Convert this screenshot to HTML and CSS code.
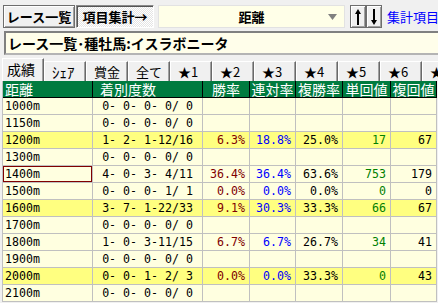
FILE: index.html
```html
<!DOCTYPE html>
<html lang="ja">
<head>
    <meta charset="UTF-8">
    <meta name="viewport" content="width=device-width, initial-scale=1.0">
    <title>レース一覧・種牡馬</title>
    <link rel="stylesheet" href="styles.css">
</head>
<body>
    <div class="toolbar">
        <div class="tool-btn btn-list">レース一覧</div>
        <div class="tool-btn btn-sum">項目集計→</div>
        <div class="select">
            <span></span>
            <span class="select-text">距離</span>
            <svg class="select-arrow" width="9" height="6" viewBox="0 0 9 6"><path d="M0 0h9L4.5 6z" fill="#808080"/></svg>
        </div>
        <div class="tool-btn sort-btn">
            <svg width="6" height="16" viewBox="0 0 6 16"><path d="M3 0L6 5H4V16H2V5H0z" fill="#000"/></svg>
        </div>
        <div class="tool-btn sort-btn">
            <svg width="6" height="16" viewBox="0 0 6 16"><path d="M3 16L6 11H4V0H2V11H0z" fill="#000"/></svg>
        </div>
        <a class="link">集計項目よ</a>
    </div>

    <div class="title">レース一覧･種牡馬:イスラボニータ</div>

    <div class="tabs">
        <div class="tab active">成績</div>
        <div class="tab tab-kana">ｼｪｱ</div>
        <div class="tab">賞金</div>
        <div class="tab">全て</div>
        <div class="tab">★1</div>
        <div class="tab">★2</div>
        <div class="tab">★3</div>
        <div class="tab">★4</div>
        <div class="tab">★5</div>
        <div class="tab">★6</div>
        <div class="tab">★7</div>
    </div>

    <div class="grid">
        <div class="row head">
            <div class="cell dist">距離</div>
            <div class="cell record">着別度数</div>
            <div class="cell">勝率</div>
            <div class="cell">連対率</div>
            <div class="cell">複勝率</div>
            <div class="cell">単回値</div>
            <div class="cell">複回値</div>
        </div>
        <div class="row">
            <div class="cell dist">1000m</div><div class="cell record">0- 0- 0- 0/ 0</div>
            <div class="cell win"></div><div class="cell rentai"></div><div class="cell"></div><div class="cell tan"></div><div class="cell"></div>
        </div>
        <div class="row">
            <div class="cell dist">1150m</div><div class="cell record">0- 0- 0- 0/ 0</div>
            <div class="cell win"></div><div class="cell rentai"></div><div class="cell"></div><div class="cell tan"></div><div class="cell"></div>
        </div>
        <div class="row mark">
            <div class="cell dist">1200m</div><div class="cell record">1- 2- 1-12/16</div>
            <div class="cell win">6.3%</div><div class="cell rentai">18.8%</div><div class="cell">25.0%</div><div class="cell tan">17</div><div class="cell">67</div>
        </div>
        <div class="row">
            <div class="cell dist">1300m</div><div class="cell record">0- 0- 0- 0/ 0</div>
            <div class="cell win"></div><div class="cell rentai"></div><div class="cell"></div><div class="cell tan"></div><div class="cell"></div>
        </div>
        <div class="row">
            <div class="cell dist selected">1400m</div><div class="cell record">4- 0- 3- 4/11</div>
            <div class="cell win">36.4%</div><div class="cell rentai">36.4%</div><div class="cell">63.6%</div><div class="cell tan">753</div><div class="cell">179</div>
        </div>
        <div class="row">
            <div class="cell dist">1500m</div><div class="cell record">0- 0- 0- 1/ 1</div>
            <div class="cell win">0.0%</div><div class="cell rentai">0.0%</div><div class="cell">0.0%</div><div class="cell tan">0</div><div class="cell">0</div>
        </div>
        <div class="row mark">
            <div class="cell dist">1600m</div><div class="cell record">3- 7- 1-22/33</div>
            <div class="cell win">9.1%</div><div class="cell rentai">30.3%</div><div class="cell">33.3%</div><div class="cell tan">66</div><div class="cell">67</div>
        </div>
        <div class="row">
            <div class="cell dist">1700m</div><div class="cell record">0- 0- 0- 0/ 0</div>
            <div class="cell win"></div><div class="cell rentai"></div><div class="cell"></div><div class="cell tan"></div><div class="cell"></div>
        </div>
        <div class="row">
            <div class="cell dist">1800m</div><div class="cell record">1- 0- 3-11/15</div>
            <div class="cell win">6.7%</div><div class="cell rentai">6.7%</div><div class="cell">26.7%</div><div class="cell tan">34</div><div class="cell">41</div>
        </div>
        <div class="row">
            <div class="cell dist">1900m</div><div class="cell record">0- 0- 0- 0/ 0</div>
            <div class="cell win"></div><div class="cell rentai"></div><div class="cell"></div><div class="cell tan"></div><div class="cell"></div>
        </div>
        <div class="row mark">
            <div class="cell dist">2000m</div><div class="cell record">0- 0- 1- 2/ 3</div>
            <div class="cell win">0.0%</div><div class="cell rentai">0.0%</div><div class="cell">33.3%</div><div class="cell tan">0</div><div class="cell">43</div>
        </div>
        <div class="row">
            <div class="cell dist">2100m</div><div class="cell record">0- 0- 0- 0/ 0</div>
            <div class="cell win"></div><div class="cell rentai"></div><div class="cell"></div><div class="cell tan"></div><div class="cell"></div>
        </div>
    </div>
</body>
</html>
```

FILE: styles.css
```css
* {
    margin: 0;
    padding: 0;
    box-sizing: border-box;
}

body {
    width: 438px;
    height: 303px;
    overflow: hidden;
    background-color: #f0f0f0;
    color: #000;
    font-family: "Noto Sans CJK JP", sans-serif;
    font-size: 13px;
    line-height: 1;
}

/* top toolbar */
.toolbar {
    display: flex;
    height: 23px;
    margin: 5px 0 0 3px;
}

.tool-btn {
    display: flex;
    align-items: center;
    justify-content: center;
    height: 23px;
    flex: none;
    font-weight: 700;
    background-color: #f0f0f0;
    border: 1px solid #6d6d6d;
    box-shadow: inset 1px 1px #fff, inset -1px -1px #a0a0a0;
}

.btn-list {
    width: 72px;
    margin-right: 1px;
}

.btn-sum {
    width: 78px;
    margin-right: 4px;
    border-color: #8a8a8a #fff #fff #8a8a8a;
    box-shadow: inset 1px 1px #555;
    background: repeating-conic-gradient(#fff 0 25%, #e4e4e4 0 50%) 0 0 / 2px 2px;
}

.select {
    width: 187px;
    height: 23px;
    margin-right: 5px;
    display: grid;
    grid-template-columns: 1fr auto 1fr;
    align-items: center;
    background-color: #ffffe8;
    border: 1px solid #e2e2e2;
    font-weight: 700;
}

.select-arrow {
    justify-self: end;
    margin-right: 7px;
}

.sort-btn {
    width: 16px;
}

.link {
    flex: 1;
    min-width: 0;
    margin-left: 5px;
    color: #0000ff;
    line-height: 23px;
    white-space: nowrap;
    overflow: hidden;
}

/* page title */
.title {
    display: flex;
    align-items: center;
    height: 24px;
    margin: 3px 0 0 4px;
    padding-left: 2px;
    background-color: #fffeea;
    border-top: 2px solid #808080;
    border-left: 2px solid #808080;
    border-bottom: 2px solid #b4b4b4;
    font-size: 14px;
    font-weight: 700;
}

/* tabs */
.tabs {
    display: flex;
    align-items: flex-end;
    height: 23px;
    margin: 3px 0 0 2px;
    overflow: hidden;
}

.tab {
    flex: none;
    width: 42px;
    height: 20px;
    padding: 3px 0 0 7px;
    border-top: 1px solid #fff;
    border-left: 1px solid #fff;
    border-right: 1px solid #696969;
    box-shadow: inset -1px 0 #a0a0a0;
    white-space: nowrap;
    overflow: hidden;
}

.tab.active {
    height: 23px;
    padding: 3px 0 0 4px;
    font-size: 14px;
}

.tab.tab-kana {
    padding-top: 2px;
    font-size: 15px;
}

/* result grid */
.grid {
    margin-left: 2px;
    width: 435px;
    border-left: 1px solid #c0c0c0;
}

.row {
    display: grid;
    grid-template-columns: 90px 110px 47px 46px 47px 48px 46px;
    height: 17px;
    background-color: #ffffe0;
}

.row.mark {
    background-color: #ffff80;
}

.cell {
    height: 17px;
    padding: 0 4px;
    border-right: 1px solid #c0c0c0;
    border-bottom: 1px solid #c0c0c0;
    font-family: "DejaVu Sans Mono", monospace;
    font-size: 11.6px;
    line-height: 16px;
    text-align: right;
    white-space: pre;
}

.cell.dist {
    padding-left: 2px;
    text-align: left;
}

.cell.record {
    text-align: center;
}

.cell.selected {
    box-shadow: inset 0 0 0 1px #800000;
}

.win {
    color: #800000;
}

.rentai {
    color: #0000ff;
}

.tan {
    color: #008000;
}

.row.head {
    background-color: #007b3f;
}

.row.head .cell {
    color: #fff;
    font-family: "Noto Sans CJK JP", sans-serif;
    font-size: 14px;
    text-align: center;
    padding: 0;
    border-color: #000;
}

.row.head .cell.dist {
    padding-left: 2px;
    text-align: left;
}

.row.head .cell.record {
    padding-left: 7px;
    text-align: left;
}
```
